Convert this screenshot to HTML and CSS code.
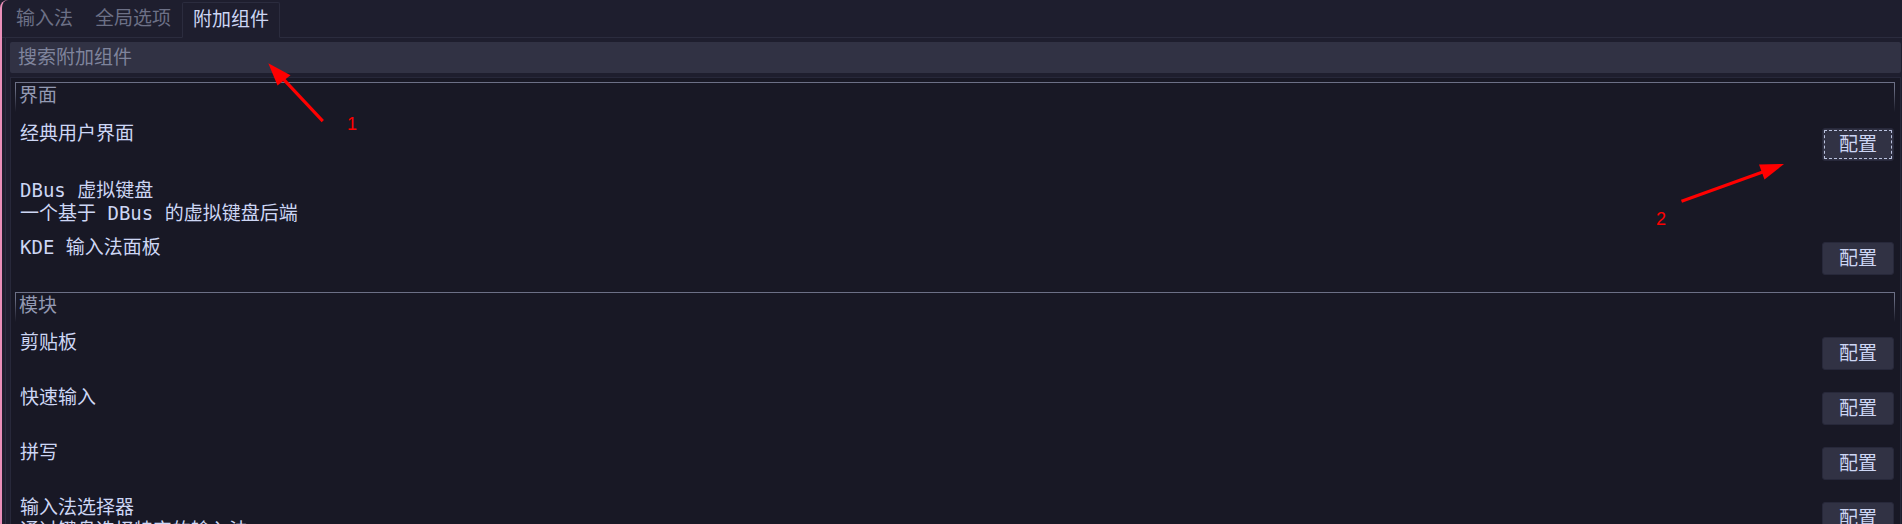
FILE: index.html
```html
<!DOCTYPE html>
<html lang="zh-CN">
<head>
<meta charset="utf-8">
<title>附加组件</title>
<link rel="stylesheet" href="styles.css">
</head>
<body>
<div class="window">
  <div class="tabbar">
    <div class="tab">输入法</div>
    <div class="tab">全局选项</div>
    <div class="tab tab--active">附加组件</div>
  </div>
  <div class="pane">
    <div class="search">搜索附加组件</div>
    <div class="scroll">
      <section class="group group--ui">
        <div class="group-title">界面</div>
        <div class="rows">
          <div class="row">
            <div class="label"><div class="name">经典用户界面</div><div class="desc"></div></div>
            <button class="btn btn--focus">配置</button>
          </div>
          <div class="row">
            <div class="label"><div class="name">DBus 虚拟键盘</div><div class="desc">一个基于 DBus 的虚拟键盘后端</div></div>
          </div>
          <div class="row">
            <div class="label"><div class="name">KDE 输入法面板</div><div class="desc"></div></div>
            <button class="btn">配置</button>
          </div>
        </div>
      </section>
      <section class="group">
        <div class="group-title">模块</div>
        <div class="rows">
          <div class="row">
            <div class="label"><div class="name">剪贴板</div><div class="desc"></div></div>
            <button class="btn">配置</button>
          </div>
          <div class="row">
            <div class="label"><div class="name">快速输入</div><div class="desc"></div></div>
            <button class="btn">配置</button>
          </div>
          <div class="row">
            <div class="label"><div class="name">拼写</div><div class="desc"></div></div>
            <button class="btn">配置</button>
          </div>
          <div class="row">
            <div class="label"><div class="name">输入法选择器</div><div class="desc">通过键盘选择特定的输入法</div></div>
            <button class="btn">配置</button>
          </div>
        </div>
      </section>
    </div>
  </div>
</div>
<svg class="annot" width="1902" height="524" viewBox="0 0 1902 524" xmlns="http://www.w3.org/2000/svg">
  <line x1="321.7" y1="120" x2="280" y2="75.5" stroke="#ff0000" stroke-width="3.2" stroke-linecap="square"/>
  <polygon points="268.3,63.3 290.5,75.3 277.5,85.5" fill="#ff0000"/>
  <text class="annot-num" x="347" y="130">1</text>
  <line x1="1683" y1="200.7" x2="1764" y2="171.5" stroke="#ff0000" stroke-width="3.2" stroke-linecap="square"/>
  <polygon points="1784,164 1759,164.5 1764.5,179.5" fill="#ff0000"/>
  <text class="annot-num" x="1656" y="225">2</text>
</svg>
</body>
</html>
```
FILE: styles.css
```css
* { box-sizing: border-box; }

html, body {
  margin: 0;
  padding: 0;
}

body {
  position: relative;
  width: 1902px;
  height: 524px;
  overflow: hidden;
  background: #1e1e2e;
  color: #cdd6f4;
  font-family: "DejaVu Sans Mono", "Noto Sans CJK SC", monospace;
  font-size: 19px;
  line-height: 23px;
}

.window {
  height: 524px;
  display: flex;
  flex-direction: column;
  border-left: 2px solid #ea8fb9;
  border-top-left-radius: 8px;
  overflow: hidden;
}

/* tabs */
.tabbar {
  flex: none;
  height: 38px;
  display: flex;
  align-items: flex-end;
  padding-left: 3px;
  border-bottom: 1px solid #2b2c3e;
}

.tab {
  height: 35px;
  padding: 0 11px;
  line-height: 33px;
  color: #6c7086;
  white-space: nowrap;
}

.tab--active {
  height: 36px;
  margin-bottom: -1px;
  padding: 0 10px;
  color: #cdd6f4;
  border: 1px solid #2b2c3e;
  border-bottom-color: #1e1e2e;
  border-radius: 2px 2px 0 0;
}

/* pane */
.pane {
  flex: 1;
  min-height: 0;
  display: flex;
  flex-direction: column;
  margin-left: 3px;
  border-left: 1px solid #2b2c3e;
  padding: 4px 1px 0 4px;
}

.search {
  flex: none;
  height: 31px;
  padding-left: 8px;
  line-height: 31px;
  background: #313244;
  border-radius: 2px;
  color: #7f849c;
}

.scroll {
  flex: 1;
  min-height: 0;
  overflow: hidden;
  margin-top: 4px;
  padding: 4px 5px 0 4px;
  background: #181825;
  border: 1px solid #27283a;
  border-bottom: none;
}

/* group boxes */
.group {
  border-style: solid;
  border-width: 1px 1px 0 1px;
  border-image: linear-gradient(to bottom, #6c7086 0, #6c7086 6px, rgba(108, 112, 134, 0) 30px) 1;
}

.group + .group {
  margin-top: 5px;
}

.group-title {
  padding: 1px 0 0 3px;
  color: #9399b2;
}

.rows {
  margin-top: 9px;
}

.row {
  height: 55px;
  display: flex;
  align-items: center;
  justify-content: space-between;
  padding-left: 4px;
}

.group--ui .row {
  height: 57px;
}

.name,
.desc {
  white-space: nowrap;
}

.desc {
  min-height: 23px;
}

.btn {
  flex: none;
  width: 72px;
  height: 33px;
  padding: 0;
  margin: 0;
  background: #313244;
  border: 1px solid #27283a;
  border-radius: 3px;
  color: #cdd6f4;
  font: inherit;
  line-height: 31px;
}

.btn--focus {
  outline: 1px dashed #bac2de;
  outline-offset: -3px;
}

/* annotations */
.annot {
  position: absolute;
  left: 0;
  top: 0;
  pointer-events: none;
}

.annot-num {
  font-family: "Liberation Sans", sans-serif;
  font-size: 18px;
  fill: #ff0000;
}
```
